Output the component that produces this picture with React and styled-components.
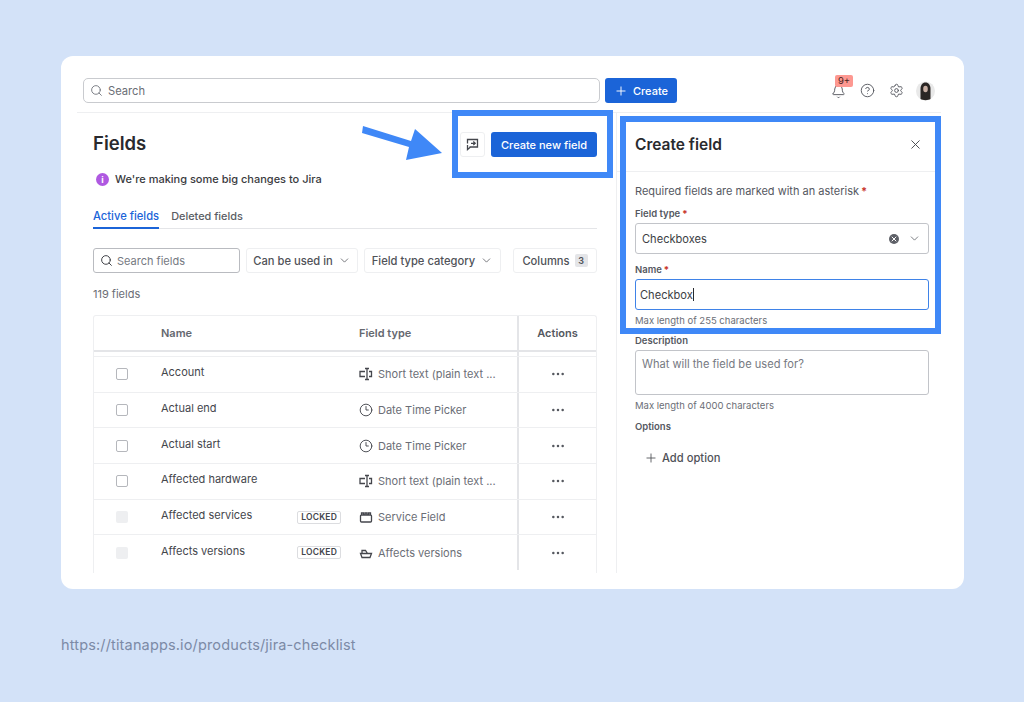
import React from 'react';
import styled, { createGlobalStyle } from 'styled-components';
import { Search, Plus, Bell, CircleHelp, Settings, X, ChevronDown, Clock3, Ellipsis } from 'lucide-react';

const GlobalStyle = createGlobalStyle`
  html, body {
    margin: 0;
    padding: 0;
    background: #d3e2f8;
    font-family: Inter, "Liberation Sans", sans-serif;
    color: #3c3e44;
  }
  * { box-sizing: border-box; }
`;

const Page = styled.div`
  width: 1024px;
  height: 702px;
  padding: 56px 0 0 61px;
  overflow: hidden;
`;

const Card = styled.div`
  position: relative;
  width: 903px;
  height: 533px;
  background: #fff;
  border-radius: 12px;
  padding: 0 23px 16px 16px;
  display: flex;
  flex-direction: column;
`;

const SourceLink = styled.div`
  margin-top: 47px;
  font-size: 14.5px;
  line-height: 18px;
  letter-spacing: 0.15px;
  color: #7c8aa6;
`;

/* top bar */
const TopBar = styled.header`
  height: 57px;
  flex: none;
  display: flex;
  align-items: center;
  gap: 5px;
  padding: 13px 0 0 6px;
  border-bottom: 1px solid #eeeff1;
`;

const GlobalSearch = styled.div`
  width: 517px;
  height: 25px;
  display: flex;
  align-items: center;
  gap: 5px;
  padding-left: 6px;
  border: 1px solid #c9cbcf;
  border-radius: 5px;
  font-size: 11.2px;
  color: #6b6e76;
`;

const PrimaryButton = styled.button`
  border: 0;
  height: 25px;
  border-radius: 3px;
  background: #1b64d8;
  color: #fff;
  font: 500 11px Inter, sans-serif;
  display: flex;
  align-items: center;
  justify-content: center;
  gap: 5px;
  width: ${(p) => p.$width}px;
  padding: 0;
`;

const TopActions = styled.div`
  margin-left: auto;
  padding-right: 6px;
  display: flex;
  align-items: center;
  gap: 14px;
`;

const BellWrap = styled.div`
  position: relative;
  width: 15px;
  height: 15px;
  color: #55585f;
`;

const BellBadge = styled.span`
  position: absolute;
  left: 4px;
  top: -8px;
  width: 18px;
  height: 12px;
  background: #fd9891;
  border-radius: 2px;
  font-size: 9.5px;
  line-height: 12px;
  text-align: center;
  color: #4c2320;
`;

const Avatar = styled.svg`
  width: 19px;
  height: 20px;
  margin-left: -2px;
`;

/* main layout */
const Main = styled.div`
  flex: 1;
  display: flex;
  min-height: 0;
`;

const FieldsColumn = styled.section`
  width: 539px;
  flex: none;
  padding: 19px 19px 0 16px;
  display: flex;
  flex-direction: column;
`;

const TitleRow = styled.div`
  height: 25px;
  display: flex;
  align-items: center;
  justify-content: space-between;
`;

const Title = styled.h1`
  margin: -3px 0 0;
  font-size: 18.5px;
  font-weight: 600;
  color: #292a2e;
`;

const TitleActions = styled.div`
  display: flex;
  gap: 6px;
`;

const IconButton = styled.button`
  width: 25px;
  height: 25px;
  padding: 0;
  background: #fff;
  border: 1px solid #eeeff1;
  border-radius: 3px;
  display: flex;
  align-items: center;
  justify-content: center;
`;

const Banner = styled.div`
  margin: 13px 0 0 3px;
  height: 18px;
  display: flex;
  align-items: center;
  gap: 6px;
  font-size: 11px;
  font-weight: 500;
  color: #3a3b40;
`;

const InfoDot = styled.span`
  width: 13px;
  height: 13px;
  border-radius: 50%;
  background: #af59e1;
  color: #fff;
  font-size: 9px;
  font-weight: 700;
  line-height: 13px;
  text-align: center;
`;

const Tabs = styled.nav`
  margin-top: 16px;
  height: 25px;
  display: flex;
  gap: 12px;
  border-bottom: 1px solid #e4e5e8;
`;

const Tab = styled.div`
  height: 25px;
  font-size: ${(p) => (p.$active ? 11.2 : 10.9)}px;
  font-weight: 500;
  line-height: 24px;
  color: ${(p) => (p.$active ? '#1b64d8' : '#5a5d64')};
  border-bottom: ${(p) => (p.$active ? '2px solid #1b64d8' : '0')};
`;

const FilterRow = styled.div`
  margin-top: 19px;
  display: flex;
  gap: 6px;
`;

const SearchFields = styled.div`
  width: 147px;
  height: 25px;
  display: flex;
  align-items: center;
  gap: 4px;
  padding-left: 6px;
  border: 1px solid #b9bbc0;
  border-radius: 3px;
  font-size: 11px;
  color: #767982;
`;

const FilterButton = styled.div`
  width: ${(p) => p.$width}px;
  height: 25px;
  margin-left: ${(p) => p.$offset || 0}px;
  display: flex;
  align-items: center;
  justify-content: center;
  gap: 5px;
  border: 1px solid #eeeff1;
  border-radius: 3px;
  font-size: 11.2px;
  font-weight: 500;
  color: #505258;
`;

const CountBadge = styled.span`
  width: 13px;
  height: 13px;
  border-radius: 2px;
  background: #e4e5e8;
  font-size: 9px;
  font-weight: 600;
  line-height: 13px;
  text-align: center;
`;

const FieldCount = styled.div`
  margin-top: 13px;
  height: 16px;
  font-size: 11px;
  line-height: 16px;
  color: #6b6e76;
`;

/* table */
const Table = styled.div`
  margin-top: 13px;
  flex: 1;
  min-height: 0;
  overflow: hidden;
  border: 1px solid #eeeff1;
  border-bottom: 0;
  border-radius: 3px 3px 0 0;
`;

const columns = '67px 198px 158px 1fr';

const HeadRow = styled.div`
  height: 36px;
  display: grid;
  grid-template-columns: ${columns};
  align-items: center;
  border-bottom: 2px solid #e4e5e8;
  font-size: 11px;
  font-weight: 600;
  color: #65686f;
`;

const Row = styled.div`
  height: ${(p) => p.$height || 35.7}px;
  display: grid;
  grid-template-columns: ${columns};
  align-items: center;
  border-top: ${(p) => (p.$gap ? '0' : '1px solid #eeeff1')};
`;

const CheckCell = styled.div`
  display: flex;
  padding-left: 22px;
`;

const CheckBox = styled.span`
  width: 12px;
  height: 12px;
  border-radius: 2px;
  border: ${(p) => (p.$locked ? '0' : '1px solid #b5b7bc')};
  background: ${(p) => (p.$locked ? '#eeeff1' : '#fff')};
`;

const NameCell = styled.div`
  display: flex;
  align-items: center;
  justify-content: space-between;
  padding-right: 18px;
  margin-top: -4px;
  font-size: 11px;
  color: #44464c;
`;

const LockedTag = styled.span`
  margin-top: 4px;
  height: 13px;
  padding: 0 3px;
  border: 1px solid #dcdde0;
  border-radius: 2px;
  font-size: 8.5px;
  font-weight: 600;
  line-height: 11px;
  letter-spacing: 0.2px;
  color: #44464c;
`;

const TypeCell = styled.div`
  display: flex;
  align-items: center;
  gap: 5px;
  font-size: 11px;
  color: #6b6e76;
  white-space: nowrap;
`;

const TypeIcon = styled.span`
  width: 14px;
  height: 14px;
  display: flex;
  color: #44464c;
`;

const ActionsCell = styled.div`
  grid-column: 4;
  align-self: stretch;
  display: flex;
  align-items: center;
  justify-content: center;
  border-left: 2px solid #e4e5e8;
  color: #55585f;
`;

/* side panel */
const Panel = styled.aside`
  flex: 1;
  border-left: 1px solid #eeeff1;
`;

const PanelHead = styled.div`
  height: 59px;
  padding: 4px 18px 0 18px;
  display: flex;
  align-items: center;
  justify-content: space-between;
  border-bottom: 1px solid #eeeff1;
`;

const PanelTitle = styled.h2`
  margin: 0;
  font-size: 15.5px;
  font-weight: 600;
  color: #292a2e;
`;

const PanelBody = styled.div`
  padding: 11px 12px 0 18px;
`;

const Hint = styled.div`
  height: 16px;
  font-size: 11px;
  line-height: 16px;
  color: #55585f;
`;

const Required = styled.span`
  color: #c9372c;
  font-weight: 700;
  margin-left: 2px;
`;

const Label = styled.div`
  margin-top: ${(p) => p.$top}px;
  height: 13px;
  font-size: 9.5px;
  line-height: 13px;
  font-weight: 600;
  color: #55585f;
`;

const FieldBox = styled.div`
  margin-top: 3px;
  height: ${(p) => p.$height}px;
  display: flex;
  align-items: ${(p) => (p.$top ? 'flex-start' : 'center')};
  padding: ${(p) => (p.$top ? '6px' : `0 7px 0 ${p.$focus ? 4 : 6}px`)};
  border: ${(p) => (p.$focus ? '1.5px solid #3f83e8' : '1px solid #c2c4c9')};
  border-radius: 3px;
  font-size: 11.1px;
  color: ${(p) => (p.$muted ? '#767982' : '#3c3e44')};
`;

const Caret = styled.span`
  width: 1px;
  height: 13px;
  background: #292a2e;
`;

const SelectEnd = styled.div`
  margin-left: auto;
  display: flex;
  align-items: center;
  gap: 9px;
  color: #55585f;
`;

const ClearDot = styled.span`
  width: 10px;
  height: 10px;
  border-radius: 50%;
  background: #5e6067;
  color: #fff;
  display: flex;
  align-items: center;
  justify-content: center;
`;

const HelperText = styled.div`
  margin-top: 4px;
  height: 13px;
  font-size: 9.5px;
  line-height: 13px;
  color: #6b6e76;
`;

const AddOption = styled.div`
  margin: 18px 0 0 9px;
  display: flex;
  align-items: center;
  gap: 4px;
  font-size: 11.2px;
  font-weight: 500;
  color: #505258;
`;

/* annotation overlays */
const Highlight = styled.div`
  position: absolute;
  left: ${(p) => p.$left}px;
  top: ${(p) => p.$top}px;
  width: ${(p) => p.$width}px;
  height: ${(p) => p.$height}px;
  border: 6px solid #3f88f7;
`;

const Arrow = styled.svg`
  position: absolute;
  left: 299px;
  top: 70px;
`;

const rows = [
  { name: 'Account', type: 'Short text (plain text ...', icon: 'text' },
  { name: 'Actual end', type: 'Date Time Picker', icon: 'clock' },
  { name: 'Actual start', type: 'Date Time Picker', icon: 'clock' },
  { name: 'Affected hardware', type: 'Short text (plain text ...', icon: 'text' },
  { name: 'Affected services', type: 'Service Field', icon: 'service', locked: true },
  { name: 'Affects versions', type: 'Affects versions', icon: 'ship', locked: true },
];

function FieldIcon({ kind }) {
  if (kind === 'clock') return <Clock3 size={14} strokeWidth={1.6} />;
  const paths = {
    text: 'M6 4.500H1v5h5M10 4.500h2.500v5H10M8 1.500v11M6 1.500h4M6 12.500h4',
    service: 'M2.500 5h9a1 1 0 0 1 1 1v5a1 1 0 0 1-1 1h-9a1 1 0 0 1-1-1V6a1 1 0 0 1 1-1zM2.500 5V3h2v2M6 5V3h2v2M9.500 5V3h2v2',
    ship: 'M1.500 7.500h11l-1.500 4h-8zM3 7.500V4.500h3.500l2 3',
  };
  return (
    <svg width="14" height="14" viewBox="0 0 14 14" fill="none" stroke="currentColor" strokeWidth="1.300">
      <path d={paths[kind]} />
    </svg>
  );
}

export default function App() {
  return (
    <Page>
      <GlobalStyle />
      <Card>
        <TopBar>
          <GlobalSearch>
            <Search size={13} strokeWidth={1.6} />
            Search
          </GlobalSearch>
          <PrimaryButton $width={72}>
            <Plus size={14} strokeWidth={1.6} />
            Create
          </PrimaryButton>
          <TopActions>
            <BellWrap>
              <Bell size={15} strokeWidth={1.5} />
              <BellBadge>9+</BellBadge>
            </BellWrap>
            <CircleHelp size={15} strokeWidth={1.5} color="#55585f" />
            <Settings size={15} strokeWidth={1.5} color="#55585f" />
            <Avatar viewBox="0 0 19 20">
              <circle cx="9.500" cy="10" r="9.500" fill="#e9e9e9" />
              <path d="M4.500 18V8c0-4 2-6.500 5-6.500s5 2.500 5 6.500v10c-2 1.500-8 1.500-10 0z" fill="#2a2624" />
              <ellipse cx="9.500" cy="8" rx="2.300" ry="3.300" fill="#c9b0a4" />
            </Avatar>
          </TopActions>
        </TopBar>

        <Main>
          <FieldsColumn>
            <TitleRow>
              <Title>Fields</Title>
              <TitleActions>
                <IconButton>
                  <svg width="15" height="15" viewBox="0 0 15 15" fill="none" stroke="#44464c" strokeWidth="1.300">
                    <path d="M2.500 6.500V2.500h10v7.500H4.500M6 6.300h4M8.300 4.500 10.200 6.300 8.300 8.100M2.500 8v4.500L5.500 10" />
                  </svg>
                </IconButton>
                <PrimaryButton $width={106}>Create new field</PrimaryButton>
              </TitleActions>
            </TitleRow>
            <Banner>
              <InfoDot>i</InfoDot>
              We're making some big changes to Jira
            </Banner>
            <Tabs>
              <Tab $active>Active fields</Tab>
              <Tab>Deleted fields</Tab>
            </Tabs>
            <FilterRow>
              <SearchFields>
                <Search size={13} strokeWidth={1.8} color="#3c3e44" />
                Search fields
              </SearchFields>
              <FilterButton $width={112}>
                Can be used in <ChevronDown size={13} strokeWidth={1.4} />
              </FilterButton>
              <FilterButton $width={137}>
                Field type category <ChevronDown size={13} strokeWidth={1.4} />
              </FilterButton>
              <FilterButton $width={84} $offset={6}>
                Columns <CountBadge>3</CountBadge>
              </FilterButton>
            </FilterRow>
            <FieldCount>119 fields</FieldCount>
            <Table>
              <HeadRow>
                <span />
                <span>Name</span>
                <span>Field type</span>
                <ActionsCell>Actions</ActionsCell>
              </HeadRow>
              <Row $gap $height={4}>
                <ActionsCell />
              </Row>
              {rows.map((row) => (
                <Row key={row.name}>
                  <CheckCell>
                    <CheckBox $locked={row.locked} />
                  </CheckCell>
                  <NameCell>
                    {row.name}
                    {row.locked && <LockedTag>LOCKED</LockedTag>}
                  </NameCell>
                  <TypeCell>
                    <TypeIcon>
                      <FieldIcon kind={row.icon} />
                    </TypeIcon>
                    {row.type}
                  </TypeCell>
                  <ActionsCell>
                    <Ellipsis size={16} strokeWidth={1.8} />
                  </ActionsCell>
                </Row>
              ))}
            </Table>
          </FieldsColumn>

          <Panel>
            <PanelHead>
              <PanelTitle>Create field</PanelTitle>
              <X size={15} strokeWidth={1.5} color="#44464c" />
            </PanelHead>
            <PanelBody>
              <Hint>
                Required fields are marked with an asterisk<Required>*</Required>
              </Hint>
              <Label $top={8}>
                Field type<Required>*</Required>
              </Label>
              <FieldBox $height={31}>
                Checkboxes
                <SelectEnd>
                  <ClearDot>
                    <X size={8} strokeWidth={3} />
                  </ClearDot>
                  <ChevronDown size={13} strokeWidth={1.4} />
                </SelectEnd>
              </FieldBox>
              <Label $top={9}>
                Name<Required>*</Required>
              </Label>
              <FieldBox $height={31} $focus>
                Checkbox
                <Caret />
              </FieldBox>
              <HelperText>Max length of 255 characters</HelperText>
              <Label $top={7}>Description</Label>
              <FieldBox $height={45} $top $muted>
                What will the field be used for?
              </FieldBox>
              <HelperText>Max length of 4000 characters</HelperText>
              <Label $top={8}>Options</Label>
              <AddOption>
                <Plus size={14} strokeWidth={1.5} />
                Add option
              </AddOption>
            </PanelBody>
          </Panel>
        </Main>

        <Highlight $left={391} $top={54} $width={161} $height={68} />
        <Highlight $left={559} $top={60} $width={321} $height={218} />
        <Arrow width="84" height="36" viewBox="0 0 84 36">
          <path d="M3 0 L51 15 L55 3 L82 27 L46 34 L49 21 L2 7 Z" fill="#3f88f7" />
        </Arrow>
      </Card>
      <SourceLink>https://titanapps.io/products/jira-checklist</SourceLink>
    </Page>
  );
}
